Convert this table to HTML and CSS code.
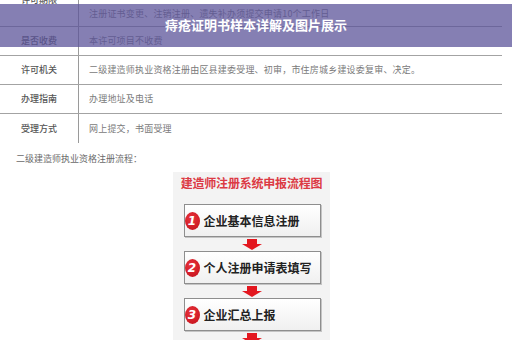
FILE: index.html
```html
<!DOCTYPE html>
<html lang="zh">
<head>
<meta charset="utf-8">
<link rel="stylesheet" href="styles.css">
</head>
<body>
<div class="page">
  <div class="article">
    <div class="table">
      <div class="row row-first">
        <div class="label label-top">许可期限</div>
        <div class="value value-bottom">注册证书变更、注销注册、遗失补办须提交申请10个工作日</div>
      </div>
      <div class="row">
        <div class="label">是否收费</div>
        <div class="value">本许可项目不收费</div>
      </div>
      <div class="row">
        <div class="label">许可机关</div>
        <div class="value">二级建造师执业资格注册由区县建委受理、初审，市住房城乡建设委复审、决定。</div>
      </div>
      <div class="row">
        <div class="label">办理指南</div>
        <div class="value">办理地址及电话</div>
      </div>
      <div class="row row-last">
        <div class="label">受理方式</div>
        <div class="value">网上提交，书面受理</div>
      </div>
    </div>
    <p class="caption">二级建造师执业资格注册流程：</p>
    <div class="chart">
      <div class="chart-title">建造师注册系统申报流程图</div>
      <div class="step"><span class="num">1</span><span class="step-text">企业基本信息注册</span></div>
      <div class="arrow"><span class="stem"></span><span class="head"></span></div>
      <div class="step"><span class="num">2</span><span class="step-text">个人注册申请表填写</span></div>
      <div class="arrow"><span class="stem"></span><span class="head"></span></div>
      <div class="step"><span class="num">3</span><span class="step-text">企业汇总上报</span></div>
      <div class="arrow"><span class="stem"></span><span class="head"></span></div>
    </div>
  </div>
  <div class="banner">
    <h1 class="banner-title">痔疮证明书样本详解及图片展示</h1>
  </div>
</div>
</body>
</html>
```

FILE: styles.css
```css
* { box-sizing: border-box; }
html, body { margin: 0; padding: 0; background: #fff; }
body { font-family: "Noto Sans CJK SC", "Noto Sans", sans-serif; }

.page {
  position: relative;
  width: 512px;
  height: 340px;
  overflow: hidden;
  background: #fff;
}

.table {
  width: 502px;
  margin-top: -10px;
}
.row {
  display: flex;
  height: 29px;
  border-bottom: 1px solid #a3a3a3;
}
.row-first { height: 37px; }
.row-last { border-bottom: none; }
.label {
  width: 79px;
  flex: none;
  border-right: 1px solid #9a9a9a;
  display: flex;
  align-items: center;
  justify-content: center;
  font-size: 9px;
  line-height: 12px;
  color: #555;
  font-weight: 500;
}
.label-top { align-items: flex-start; padding-top: 4px; }
.value {
  flex: 1;
  display: flex;
  align-items: center;
  padding-left: 10px;
  font-size: 9px;
  line-height: 12px;
  letter-spacing: 0.2px;
  color: #7a7a7a;
}
.value-bottom { align-items: flex-end; padding-bottom: 6px; }

.caption {
  margin: 10px 0 0 16px;
  font-size: 9px;
  line-height: 12px;
  color: #6a6a6a;
}

.chart {
  margin: 7px 0 0 173px;
  width: 157px;
  height: 180px;
  background: #f3f3f3;
  padding-top: 3px;
  display: flex;
  flex-direction: column;
  align-items: center;
}
.chart-title {
  font-size: 12px;
  line-height: 16px;
  font-weight: 700;
  color: #dc3a44;
  letter-spacing: -0.2px;
  margin-bottom: 13px;
}
.step {
  width: 137px;
  height: 33px;
  margin-left: 1px;
  border: 1px solid #8e8e8e;
  box-shadow: 1px 1px 0 #c4c4c4;
  background: linear-gradient(#ffffff, #f0f0f0);
  display: flex;
  align-items: center;
  gap: 4px;
}
.num {
  width: 15px;
  height: 18px;
  border-radius: 50%;
  background: radial-gradient(circle at 40% 35%, #e8323a, #c2101a);
  color: #fff;
  font-family: "DejaVu Sans", sans-serif;
  font-size: 12px;
  font-weight: 700;
  font-style: italic;
  line-height: 18px;
  text-align: center;
  flex: none;
}
.step-text {
  font-size: 12px;
  font-weight: 600;
  color: #222;
  line-height: 16px;
}
.arrow {
  height: 14px;
  display: flex;
  flex-direction: column;
  align-items: center;
  padding-top: 2px;
}
.stem {
  width: 10px;
  height: 5px;
  background: #e3171f;
}
.head {
  width: 0;
  height: 0;
  border-left: 10px solid transparent;
  border-right: 10px solid transparent;
  border-top: 6px solid #e3171f;
}

.banner {
  position: absolute;
  left: 0;
  top: 4px;
  width: 512px;
  height: 43px;
  background: rgba(90, 82, 152, 0.74);
  display: flex;
  align-items: center;
  justify-content: center;
}
.banner-title {
  margin: 0 0 1px 0;
  font-size: 13px;
  line-height: 16px;
  font-weight: 700;
  color: #fff;
}
```
